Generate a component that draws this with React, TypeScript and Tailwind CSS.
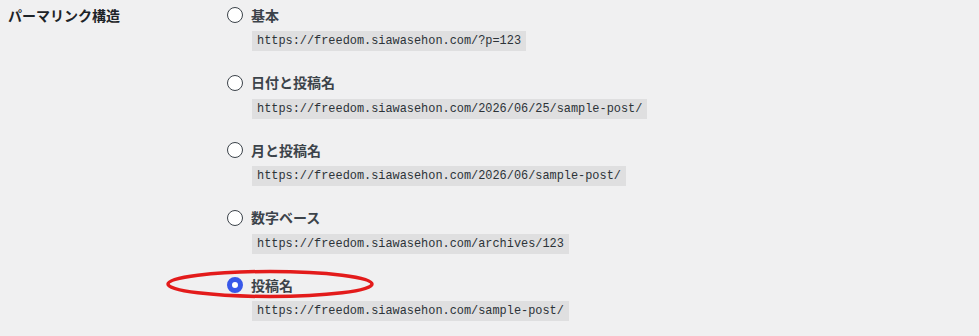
const options = [
  { label: "基本", url: "https://freedom.siawasehon.com/?p=123" },
  { label: "日付と投稿名", url: "https://freedom.siawasehon.com/2026/06/25/sample-post/" },
  { label: "月と投稿名", url: "https://freedom.siawasehon.com/2026/06/sample-post/" },
  { label: "数字ベース", url: "https://freedom.siawasehon.com/archives/123" },
  { label: "投稿名", url: "https://freedom.siawasehon.com/sample-post/", checked: true },
]

function Radio({ checked }: { checked?: boolean }) {
  if (checked) {
    return <span className="block w-4 h-4 rounded-full border-[5px] border-[#3858e9] bg-white shrink-0" />
  }
  return <span className="block w-4 h-4 rounded-full border border-[#3c434a] bg-white shrink-0" />
}

export default function App() {
  return (
    <div
      className="relative h-[336px] w-[979px] overflow-hidden bg-[#f0f0f1] text-[#1d2327]"
      style={{ fontFamily: '"Noto Sans", "Noto Sans CJK JP", sans-serif' }}
    >
      <div className="flex pt-[4px]">
        <div className="w-[227px] pl-2 shrink-0">
          <div className="h-[22px] flex items-center text-[14px] font-bold">パーマリンク構造</div>
        </div>
        <div className="flex flex-col gap-y-[20.5px]">
          {options.map((o) => (
            <div key={o.label} className="flex flex-col items-start">
              <label className="h-[22px] flex items-center gap-2">
                <Radio checked={o.checked} />
                <span className="text-[14px] font-bold text-[#3c434a]">{o.label}</span>
              </label>
              <code
                className="block mt-[5px] ml-[25px] h-5 leading-5 px-[5px] text-[11.9px] bg-black/[0.07] text-[#2c3338]"
                style={{ fontFamily: '"Liberation Mono", monospace' }}
              >
                {o.url}
              </code>
            </div>
          ))}
        </div>
      </div>

      {/* highlight around the selected option */}
      <svg className="absolute left-[164px] top-[268px]" width="212" height="32" viewBox="0 0 212 32">
        <ellipse cx="106" cy="16" rx="102" ry="12.5" fill="none" stroke="#e31b1b" strokeWidth="3.5" />
      </svg>
    </div>
  )
}
